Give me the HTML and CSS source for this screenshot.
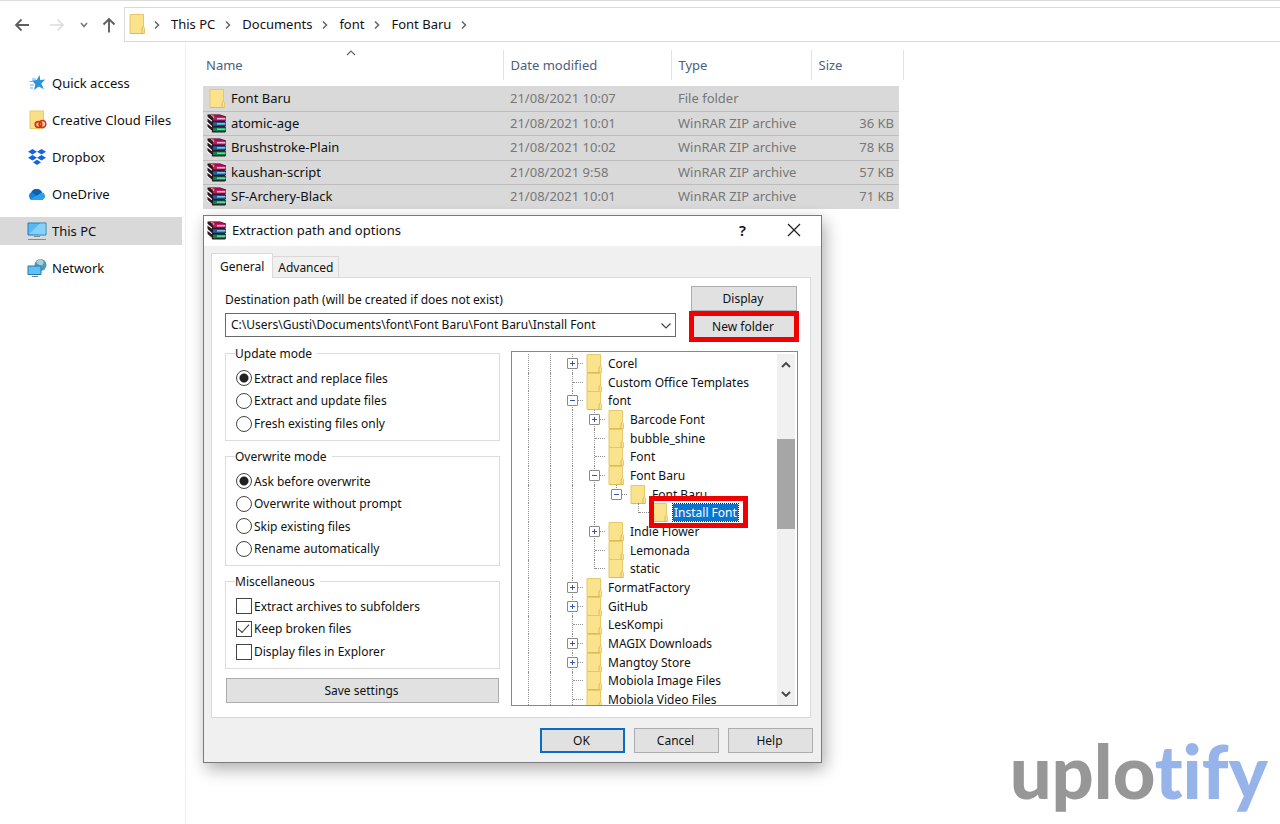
FILE: index.html
```html
<!DOCTYPE html>
<html lang="en">
<head>
<meta charset="utf-8">
<title>Font Baru</title>
<link rel="stylesheet" href="styles.css">
</head>
<body>
<svg class="defs" aria-hidden="true">
  <symbol id="folder" viewBox="0 0 16 20" preserveAspectRatio="none">
    <path d="M1 .5h13.500v12.500l1 1V19.500H1z" fill="#fbe38d" stroke="#e5c765"/>
    <path d="M13 19v-5l1.500-1.500" fill="none" stroke="#d9b84e"/>
    <path d="M1 19.500h14" stroke="#dcbc55"/>
  </symbol>
  <symbol id="rar" viewBox="0 0 20 19">
    <path d="M.5.5H13l6 2v4l-1 .5 1 1v4l-1 .5 1 1v4l-1 1H5.500L.5 14z" fill="#2a1722"/>
    <path d="M0 2.500l5 4v1.300L0 4.200zM0 7.500l5 4.500v1.300L0 9.500zM0 12.500l5 4.300v1.200L0 14.300z" fill="#fff"/>
    <path d="M2 .7h11L18.500 3H6z" fill="#a30d55"/>
    <path d="M6 3h12.500v3.500H6z" fill="#bf1867"/>
    <path d="M10 4.700h8.500" stroke="#f4b5d0" stroke-width="1.600"/>
    <path d="M6 8.200h12.500v3.600H6z" fill="#1463a3"/>
    <path d="M10 9.800h8.500" stroke="#7cc0ee" stroke-width="1.600"/>
    <path d="M6 13.600h12.500v3.600H6z" fill="#078551"/>
    <path d="M10 15.200h8.500" stroke="#5fdba2" stroke-width="1.600"/>
    <path d="M4 1.500l3 .8-1 1.700" stroke="#f3c63a" fill="none"/>
  </symbol>
  <symbol id="chev" viewBox="0 0 8 10"><path d="M2 1.500L5.500 5 2 8.500" fill="none" stroke="#666" stroke-width="1.500"/></symbol>
</svg>

<main class="explorer">
  <header class="bar">
    <button class="nav" aria-label="Back"><svg width="16" height="14" viewBox="0 0 16 14"><path d="M7.500 1.500L2 7l5.500 5.500M2 7h13" fill="none" stroke="#5e5e5e" stroke-width="1.800"/></svg></button>
    <button class="nav fwd" aria-label="Forward"><svg width="16" height="14" viewBox="0 0 16 14"><path d="M8.500 1.500L14 7l-5.500 5.500M14 7H1" fill="none" stroke="#dcdcdc" stroke-width="1.600"/></svg></button>
    <button class="nav recent" aria-label="Recent locations"><svg width="8" height="6" viewBox="0 0 8 6"><path d="M1 1l3 3.500L7 1" fill="none" stroke="#777" stroke-width="1.600"/></svg></button>
    <button class="nav" aria-label="Up"><svg width="14" height="16" viewBox="0 0 14 16"><path d="M1.500 7.500L7 2l5.500 5.500M7 2v13.500" fill="none" stroke="#5e5e5e" stroke-width="1.900"/></svg></button>
    <nav class="address" aria-label="Path">
      <svg class="fold" width="16" height="20"><use href="#folder"/></svg>
      <svg class="sep" width="8" height="10"><use href="#chev"/></svg>
      <a href="#pc">This PC</a>
      <svg class="sep" width="8" height="10"><use href="#chev"/></svg>
      <a href="#documents">Documents</a>
      <svg class="sep" width="8" height="10"><use href="#chev"/></svg>
      <a href="#font">font</a>
      <svg class="sep" width="8" height="10"><use href="#chev"/></svg>
      <a href="#baru">Font Baru</a>
      <svg class="sep" width="8" height="10"><use href="#chev"/></svg>
    </nav>
  </header>
  <div class="body">
    <nav class="side" aria-label="Places">
      <a href="#quick"><svg width="20" height="20" viewBox="0 0 20 20"><path d="M12.500 2l.8 5 5-.5-4 4 2.500 5.700-5-2.700-4.800 3.500 1.300-5.500L5 7.500l4.800-.4z" fill="#2a93dc"/><path d="M5 6h4M2.500 8.500h4M3 12h4M3 15h3" stroke="#5ab4ec" stroke-width="1.200"/></svg>Quick access</a>
      <a href="#creative"><svg width="20" height="20" viewBox="0 0 20 20"><path d="M3 1h13.500v17.500H3z" fill="#fbdf86" stroke="#e9c968"/><g fill="none" stroke="#d32f1a" stroke-width="1.700"><ellipse cx="11.500" cy="14.500" rx="3.200" ry="2.800"/><ellipse cx="15.500" cy="14" rx="3.200" ry="3.500"/><path d="M11.500 14l2.500 2.500"/></g></svg>Creative Cloud Files</a>
      <a href="#dropbox"><svg width="20" height="20" viewBox="0 0 20 20"><path d="M5.500 2l4.500 2.800-4.500 2.800L1 4.800zM14.500 2L19 4.800l-4.500 2.800L10 4.800zM5.500 8l4.500 2.800-4.500 2.800L1 10.800zM14.500 8l4.500 2.800-4.500 2.800-4.500-2.800zM10 12.800l4 2.500-4 2.700-4-2.700z" fill="#1463e0"/></svg>Dropbox</a>
      <a href="#onedrive"><svg width="20" height="20" viewBox="0 0 20 20"><path d="M5 16a4.300 4.300 0 0 1-.6-8A6 6 0 0 1 15 8.500a4 4 0 0 1 .5 7.500z" fill="#1683d8"/><path d="M4.400 8A6 6 0 0 1 15 8.500L10 12z" fill="#0e5fae"/><path d="M3 15.500L15 8.500a4 4 0 0 1 .5 7.500H5z" fill="#2aa1ea"/></svg>OneDrive</a>
      <a href="#pc" class="on"><svg width="20" height="20" viewBox="0 0 20 20"><path d="M1 2h18v12H1z" fill="#55b9f3" stroke="#2b7fae"/><path d="M2 13L13 2.500h5.500v11z" fill="#86d0fa"/><path d="M7 15.500h6M1 18.500h18" stroke="#7d8e99"/></svg>This PC</a>
      <a href="#network"><svg width="20" height="20" viewBox="0 0 20 20"><circle cx="13.500" cy="7" r="6" fill="#5598b5"/><path d="M13 1.500q4 1 3 4t-4 1-2-3zM10 8l5 1" fill="#a4cfdf" stroke="#a4cfdf"/><path d="M1 8h13v8.500H1z" fill="#60bff5" stroke="#2478a7"/><path d="M5 18.500h6" stroke="#6a8797"/></svg>Network</a>
    </nav>
    <section class="files">
      <table>
        <colgroup><col class="c-name"><col class="c-date"><col class="c-type"><col class="c-size"><col class="c-end"></colgroup>
        <thead><tr><th><svg class="sort" width="10" height="6" viewBox="0 0 10 6"><path d="M1 5l4-4 4 4" fill="none" stroke="#666" stroke-width="1.200"/></svg>Name</th><th>Date modified</th><th>Type</th><th>Size</th><td></td></tr></thead>
        <tbody>
          <tr><td><span class="cell"><svg class="fi" width="20" height="19"><use href="#folder" x="2" width="16" height="19"/></svg>Font Baru</span></td><td>21/08/2021 10:07</td><td>File folder</td><td></td></tr>
          <tr><td><span class="cell"><svg class="fi" width="20" height="19"><use href="#rar"/></svg>atomic-age</span></td><td>21/08/2021 10:01</td><td>WinRAR ZIP archive</td><td>36 KB</td></tr>
          <tr><td><span class="cell"><svg class="fi" width="20" height="19"><use href="#rar"/></svg>Brushstroke-Plain</span></td><td>21/08/2021 10:02</td><td>WinRAR ZIP archive</td><td>78 KB</td></tr>
          <tr><td><span class="cell"><svg class="fi" width="20" height="19"><use href="#rar"/></svg>kaushan-script</span></td><td>21/08/2021 9:58</td><td>WinRAR ZIP archive</td><td>57 KB</td></tr>
          <tr><td><span class="cell"><svg class="fi" width="20" height="19"><use href="#rar"/></svg>SF-Archery-Black</span></td><td>21/08/2021 10:01</td><td>WinRAR ZIP archive</td><td>71 KB</td></tr>
        </tbody>
      </table>
    </section>
  </div>
</main>

<div class="dialog" role="dialog" aria-labelledby="dlg-title">
  <div class="title">
    <svg width="20" height="19"><use href="#rar"/></svg>
    <h1 id="dlg-title">Extraction path and options</h1>
    <button class="help-q" aria-label="Context help">?</button>
    <button class="close" aria-label="Close"><svg width="14" height="14" viewBox="0 0 14 14"><path d="M1 1l12 12M13 1L1 13" stroke="#222" stroke-width="1.300"/></svg></button>
  </div>
  <div class="tabs" role="tablist">
    <button role="tab" aria-selected="true" class="tab on">General</button>
    <button role="tab" aria-selected="false" class="tab">Advanced</button>
  </div>
  <div class="panel">
    <div class="top">
      <div class="dest">
        <label for="path">Destination path (will be created if does not exist)</label>
        <div class="combo">
          <select id="path"><option>C:\Users\Gusti\Documents\font\Font Baru\Font Baru\Install Font</option></select>
          <svg width="12" height="8" viewBox="0 0 12 8"><path d="M1.500 1.500L6 6l4.500-4.500" fill="none" stroke="#444" stroke-width="1.200"/></svg>
        </div>
      </div>
      <div class="acts">
        <button class="btn">Display</button>
        <div class="mark"><button class="btn">New folder</button></div>
      </div>
    </div>
    <div class="cols">
      <form class="opts">
        <fieldset>
          <legend>Update mode</legend>
          <div class="list three">
            <label><input type="radio" name="u" checked>Extract and replace files</label>
            <label><input type="radio" name="u">Extract and update files</label>
            <label><input type="radio" name="u">Fresh existing files only</label>
          </div>
        </fieldset>
        <fieldset>
          <legend>Overwrite mode</legend>
          <div class="list four">
            <label><input type="radio" name="o" checked>Ask before overwrite</label>
            <label><input type="radio" name="o">Overwrite without prompt</label>
            <label><input type="radio" name="o">Skip existing files</label>
            <label><input type="radio" name="o">Rename automatically</label>
          </div>
        </fieldset>
        <fieldset>
          <legend>Miscellaneous</legend>
          <div class="list three">
            <label><input type="checkbox">Extract archives to subfolders</label>
            <label><input type="checkbox" checked>Keep broken files</label>
            <label><input type="checkbox">Display files in Explorer</label>
          </div>
        </fieldset>
        <button type="button" class="btn save">Save settings</button>
      </form>
      <div class="treebox">
        <ul class="tree">
          <li><i></i><i></i><i class="b"><b class="plus"></b></i><svg><use href="#folder"/></svg><span>Corel</span></li>
          <li><i></i><i></i><i class="b"></i><svg><use href="#folder"/></svg><span>Custom Office Templates</span></li>
          <li><i></i><i></i><i class="b"><b></b></i><svg><use href="#folder"/></svg><span>font</span></li>
          <li><i></i><i></i><i></i><i class="b"><b class="plus"></b></i><svg><use href="#folder"/></svg><span>Barcode Font</span></li>
          <li><i></i><i></i><i></i><i class="b"></i><svg><use href="#folder"/></svg><span>bubble_shine</span></li>
          <li><i></i><i></i><i></i><i class="b"></i><svg><use href="#folder"/></svg><span>Font</span></li>
          <li><i></i><i></i><i></i><i class="b"><b></b></i><svg><use href="#folder"/></svg><span>Font Baru</span></li>
          <li><i></i><i></i><i></i><i></i><i class="b last"><b></b></i><svg><use href="#folder"/></svg><span>Font Baru</span></li>
          <li class="sel"><i></i><i></i><i></i><i></i><i class="none"></i><i class="b last"></i><svg><use href="#folder"/></svg><span>Install Font</span></li>
          <li><i></i><i></i><i></i><i class="b"><b class="plus"></b></i><svg><use href="#folder"/></svg><span>Indie Flower</span></li>
          <li><i></i><i></i><i></i><i class="b"></i><svg><use href="#folder"/></svg><span>Lemonada</span></li>
          <li><i></i><i></i><i></i><i class="b last"></i><svg><use href="#folder"/></svg><span>static</span></li>
          <li><i></i><i></i><i class="b"><b class="plus"></b></i><svg><use href="#folder"/></svg><span>FormatFactory</span></li>
          <li><i></i><i></i><i class="b"><b class="plus"></b></i><svg><use href="#folder"/></svg><span>GitHub</span></li>
          <li><i></i><i></i><i class="b"></i><svg><use href="#folder"/></svg><span>LesKompi</span></li>
          <li><i></i><i></i><i class="b"><b class="plus"></b></i><svg><use href="#folder"/></svg><span>MAGIX Downloads</span></li>
          <li><i></i><i></i><i class="b"><b class="plus"></b></i><svg><use href="#folder"/></svg><span>Mangtoy Store</span></li>
          <li><i></i><i></i><i class="b"></i><svg><use href="#folder"/></svg><span>Mobiola Image Files</span></li>
          <li><i></i><i></i><i class="b"></i><svg><use href="#folder"/></svg><span>Mobiola Video Files</span></li>
        </ul>
        <div class="scroll">
          <svg width="10" height="7" viewBox="0 0 10 7"><path d="M1 6l4-4 4 4" fill="none" stroke="#444" stroke-width="1.900"/></svg>
          <div class="track"><div class="thumb"></div></div>
          <svg width="10" height="7" viewBox="0 0 10 7"><path d="M1 1l4 4 4-4" fill="none" stroke="#444" stroke-width="1.900"/></svg>
        </div>
      </div>
    </div>
  </div>
  <div class="foot">
    <button class="btn ok">OK</button>
    <button class="btn">Cancel</button>
    <button class="btn">Help</button>
  </div>
</div>

<div class="logo">uplo<span>tify</span></div>
</body>
</html>
```
FILE: styles.css
```css
*, *::before, *::after { box-sizing: border-box; }
body {
  margin: 0;
  min-height: 100vh;
  position: relative;
  overflow: hidden;
  background: #fff;
  color: #111;
  font: 13px/19px "Noto Sans", "Open Sans", sans-serif;
}
button, select, input { font: inherit; color: inherit; margin: 0; padding: 0; }
a { color: inherit; text-decoration: none; }
svg { flex: none; display: block; }
.defs { position: absolute; width: 0; height: 0; }

.explorer { min-height: 100vh; display: flex; flex-direction: column; border-top: 1px solid #dcdcdc; }
.bar { display: flex; align-items: center; padding: 6px 0 0 14px; }
.nav { border: 0; background: none; display: flex; }
.nav.fwd { margin-left: 19px; }
.nav.recent { margin: 0 14px 0 15px; }
.address {
  flex: 1;
  height: 35px;
  margin-left: 8px;
  padding: 0 0 1px 4px;
  display: flex;
  align-items: center;
  border: 1px solid #d9d9d9;
  border-right: 0;
}
.sep { margin: 2px 10px 0 9px; }
.address .fold { margin-right: -1px; }

.body { flex: 1; display: flex; }
.side {
  width: 186px;
  padding: 27px 3px 0 0;
  border-right: 1px solid #f0f0f0;
  display: flex;
  flex-direction: column;
  gap: 9px;
}
.side a { height: 28px; padding-left: 27px; display: flex; align-items: center; gap: 5px; white-space: nowrap; }
.side .on { background: #d9d9d9; }

.files { flex: 1; padding: 8px 0 0 17px; }
.files table { width: 701px; table-layout: fixed; border-collapse: collapse; }
.c-name { width: 300px; }
.c-date { width: 168px; }
.c-type { width: 140px; }
.c-size { width: 88px; }
.files th {
  height: 30px;
  padding: 0 7px;
  text-align: left;
  font-weight: 400;
  color: #4c607a;
  border-right: 1px solid #e2e2e2;
  position: relative;
}
.files th:first-child { padding-left: 3px; }
.files th:nth-child(4) { border-right: 0; }
.files thead td { border-right: 1px solid #e2e2e2; }
.sort { position: absolute; left: 143px; top: 0; }
.files tbody::before { content: ""; display: block; height: 6px; }
.files tbody td { height: 24px; padding: 0 7px; color: #777; background: #d9d9d9; border-bottom: 1px solid #bdbdbd; white-space: nowrap; }
.files tbody tr:nth-child(odd) td { height: 25px; }
.files tbody tr:last-child td { border-bottom: 0; }
.files tbody td:first-child { color: #111; padding-left: 4px; }
.files tbody td:nth-child(4) { text-align: right; padding-right: 5px; }
.cell { display: flex; align-items: center; gap: 4px; }

.dialog {
  position: absolute;
  left: 203px;
  top: 215px;
  width: 619px;
  background: #f0f0f0;
  border: 1px solid #7a7a7a;
  box-shadow: 3px 6px 16px rgba(0, 0, 0, .32);
  font: 12px/17px "Noto Sans", sans-serif;
}
.title { height: 30px; padding: 0 20px 2px 3px; background: #fff; display: flex; align-items: center; gap: 5px; }
.title h1 { flex: 1; margin: 0; font-size: 13px; font-weight: 400; }
.title button { border: 0; background: none; display: flex; }
.title .help-q { font-size: 15px; font-weight: 600; margin-right: 36px; }
.tabs { display: flex; align-items: flex-end; padding: 7px 0 0 7px; position: relative; margin-bottom: -1px; }
.tab { height: 22px; padding: 0 5px; border: 1px solid #d9d9d9; border-left: 0; background: #f0f0f0; }
.tab.on { height: 25px; padding: 0 8px; border-left: 1px solid #d9d9d9; border-bottom: 0; background: #fff; }
.panel { margin: 0 10px 0 7px; padding: 8px 11px 11px 13px; background: #fff; border: 1px solid #d9d9d9; }
.top { display: flex; justify-content: space-between; }
.dest { width: 451px; padding-top: 5px; }
.dest label { display: block; margin-bottom: 5px; }
.combo { position: relative; }
.combo select { display: block; width: 100%; height: 24px; padding: 0 24px 1px 5px; appearance: none; background: #fff; border: 1px solid #6a6a6a; border-radius: 0; }
.combo svg { position: absolute; right: 4px; top: 9px; pointer-events: none; }
.acts { width: 110px; }
.btn { height: 25px; padding: 0 2px 0 0; border: 1px solid #adadad; background: #e1e1e1; text-align: center; }
.acts > .btn { display: block; width: 106px; margin: 0 2px; }
.mark { border: 5px solid #f00000; height: 31px; display: flex; }
.mark .btn { flex: 1; height: 21px; border-color: #e1e1e1; }
.cols { display: flex; justify-content: space-between; padding: 3px 1px 0 0; }
.opts { width: 275px; display: flex; flex-direction: column; }
fieldset { margin: 0 0 7px; padding: 5px 10px; border: 1px solid #dcdcdc; min-width: 0; }
legend { padding: 0 5px 0 0; margin-left: -1px; line-height: 17px; }
.list { display: grid; grid-auto-rows: 1fr; }
.three { height: 68px; }
.four { height: 90px; }
.list label { display: flex; align-items: center; gap: 2px; }
.list input { appearance: none; width: 16px; height: 16px; border: 1px solid #444; background: #fff; }
.list input[type="radio"] { border-radius: 50%; }
.list input[type="radio"]:checked { background: radial-gradient(circle, #222 0 4px, #fff 5px); }
.list input[type="checkbox"]:checked::after { content: ""; display: block; width: 11px; height: 6px; margin: 2px 0 0 1px; border: solid #333; border-width: 0 0 1px 1px; transform: rotate(-48deg); }
.save { margin: 2px 1px 0; }

.treebox { width: 287px; height: 355px; margin-top: 6px; padding: 2px 2px 0; border: 1px solid #828790; display: flex; overflow: hidden; }
.tree { flex: 1; height: 355px; margin: 0; padding: 0 0 0 3px; list-style: none; display: grid; grid-auto-rows: 1fr; }
.tree li { display: flex; align-items: center; position: relative; min-height: 0; }
.tree i { width: 11px; margin-left: 11px; align-self: stretch; border-left: 1px dotted #909090; display: flex; align-items: center; }
.tree i.b::after { content: ""; flex: 1; border-top: 1px dotted #909090; }
.tree i.last { border-left-color: transparent; position: relative; }
.tree i.last::before { content: ""; position: absolute; left: -1px; top: 0; height: 50%; border-left: 1px dotted #909090; }
.tree i.none { border-color: transparent; }
.tree b {
  width: 11px;
  height: 11px;
  margin-left: -6px;
  position: relative;
  border: 1px solid #8a8a8a;
  border-radius: 1px;
  background: linear-gradient(#3b55a5, #3b55a5) center / 5px 1px no-repeat #fff;
}
.tree b.plus { background: linear-gradient(#3b55a5, #3b55a5) center / 5px 1px no-repeat, linear-gradient(#3b55a5, #3b55a5) center / 1px 5px no-repeat #fff; }
.tree svg { width: 16px; height: 19px; margin: 0 5px 0 3px; }
.tree span { white-space: nowrap; line-height: 17px; padding: 0 1px; }
.tree .sel span { background: #0a74d0; color: #fff; outline: 1px dotted #222; }
.tree .sel::after { content: ""; position: absolute; left: 132px; top: -7px; width: 99px; height: 32px; border: 5px solid #f00000; z-index: 1; }
.scroll { width: 18px; background: #f0f0f0; display: flex; flex-direction: column; align-items: center; padding: 7px 0; }
.track { flex: 1; width: 100%; padding-top: 71px; }
.thumb { height: 90px; background: #a6a6a6; }

.foot { display: flex; justify-content: flex-end; gap: 9px; padding: 10px 8px 9px; }
.foot .btn { width: 85px; }
.foot .ok { border: 2px solid #0a6cc4; }

.logo { position: absolute; right: 12px; bottom: 15px; font: 900 74px/76px Lato, sans-serif; font-variant-ligatures: none; color: #979797; }
.logo span { color: #97b4ea; }
```
